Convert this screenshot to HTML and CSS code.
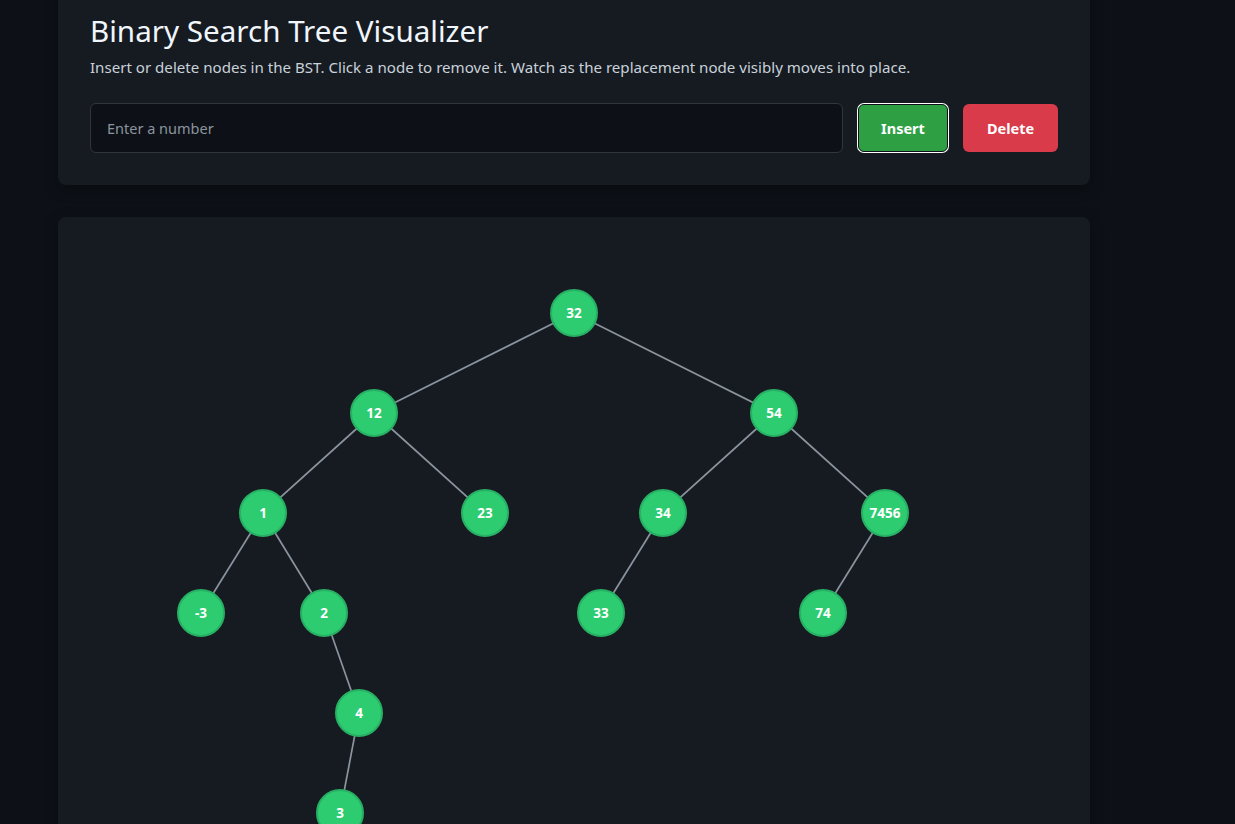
FILE: index.html
```html
<!DOCTYPE html>
<html lang="en">
<head>
<meta charset="utf-8">
<title>Binary Search Tree Visualizer</title>
<link rel="stylesheet" href="styles.css">
</head>
<body>
<main class="page">
  <section class="card controls-card">
    <h1 class="title">Binary Search Tree Visualizer</h1>
    <p class="subtitle">Insert or delete nodes in the BST. Click a node to remove it. Watch as the replacement node visibly moves into place.</p>
    <div class="controls">
      <input class="num-input" type="text" placeholder="Enter a number">
      <button class="btn btn-insert">Insert</button>
      <button class="btn btn-delete">Delete</button>
    </div>
  </section>
  <section class="card tree-card">
    <svg class="tree" width="1032" height="680" viewBox="0 0 1032 680">
      <g class="edges">
        <line x1="516" y1="96" x2="316" y2="196"/>
        <line x1="516" y1="96" x2="716" y2="196"/>
        <line x1="316" y1="196" x2="205" y2="296"/>
        <line x1="316" y1="196" x2="427" y2="296"/>
        <line x1="716" y1="196" x2="605" y2="296"/>
        <line x1="716" y1="196" x2="827" y2="296"/>
        <line x1="205" y1="296" x2="143" y2="396"/>
        <line x1="205" y1="296" x2="266" y2="396"/>
        <line x1="605" y1="296" x2="543" y2="396"/>
        <line x1="827" y1="296" x2="765" y2="396"/>
        <line x1="266" y1="396" x2="301" y2="496"/>
        <line x1="301" y1="496" x2="282" y2="596"/>
      </g>
      <g class="nodes">
        <g class="node"><circle cx="516" cy="96" r="23"/><text x="516" y="96">32</text></g>
        <g class="node"><circle cx="316" cy="196" r="23"/><text x="316" y="196">12</text></g>
        <g class="node"><circle cx="716" cy="196" r="23"/><text x="716" y="196">54</text></g>
        <g class="node"><circle cx="205" cy="296" r="23"/><text x="205" y="296">1</text></g>
        <g class="node"><circle cx="427" cy="296" r="23"/><text x="427" y="296">23</text></g>
        <g class="node"><circle cx="605" cy="296" r="23"/><text x="605" y="296">34</text></g>
        <g class="node"><circle cx="827" cy="296" r="23"/><text x="827" y="296">7456</text></g>
        <g class="node"><circle cx="143" cy="396" r="23"/><text x="143" y="396">-3</text></g>
        <g class="node"><circle cx="266" cy="396" r="23"/><text x="266" y="396">2</text></g>
        <g class="node"><circle cx="543" cy="396" r="23"/><text x="543" y="396">33</text></g>
        <g class="node"><circle cx="765" cy="396" r="23"/><text x="765" y="396">74</text></g>
        <g class="node"><circle cx="301" cy="496" r="23"/><text x="301" y="496">4</text></g>
        <g class="node"><circle cx="282" cy="596" r="23"/><text x="282" y="596">3</text></g>
      </g>
    </svg>
  </section>
</main>
</body>
</html>
```

FILE: styles.css
```css
* { box-sizing: border-box; }

html, body {
  margin: 0;
  padding: 0;
  background: #0d1117;
  color: #c9d1d9;
  font-family: "Noto Sans", "Open Sans", sans-serif;
  overflow: hidden;
}

.page {
  width: 1032px;
  margin-left: 58px;
  margin-top: -20px;
  display: flex;
  flex-direction: column;
  gap: 32px;
}

.card {
  background: #161b22;
  border-radius: 8px;
  box-shadow: 0 4px 14px rgba(0, 0, 0, 0.35);
}

.controls-card {
  padding: 32px;
}

.title {
  margin: 0;
  font-size: 29.6px;
  font-weight: 400;
  line-height: 38px;
  color: #f0f6fc;
}

.subtitle {
  margin: 6px 0 0;
  font-size: 15.1px;
  line-height: 22px;
  color: #c9d1d9;
}

.controls {
  display: flex;
  gap: 15px;
  margin-top: 25px;
  align-items: center;
}

.num-input {
  flex: 1;
  height: 50px;
  background: #0d1117;
  border: 1px solid #30363d;
  border-radius: 6px;
  padding: 0 16px;
  font-family: inherit;
  font-size: 14.5px;
  color: #c9d1d9;
  outline: none;
}

.num-input::placeholder {
  color: #8b949e;
}

.btn {
  height: 48px;
  border: none;
  border-radius: 6px;
  font-family: inherit;
  font-size: 14.5px;
  font-weight: 700;
  color: #ffffff;
  cursor: pointer;
  padding: 0;
}

.btn-insert {
  background: #2ea043;
  border: 1px solid #0d1117;
  box-shadow: 0 0 0 1px #ffffff;
  width: 90px;
}

.btn-delete {
  background: #da3b4b;
  width: 95px;
}

.tree-card {
  min-height: 700px;
}

.tree {
  display: block;
}

.edges line {
  stroke: #8b949e;
  stroke-width: 1.7;
}

.node circle {
  fill: #2ecc71;
  stroke: #27b063;
  stroke-width: 2;
}

.node text {
  fill: #ffffff;
  font-family: "Noto Sans", "Open Sans", sans-serif;
  font-size: 13.5px;
  font-weight: 700;
  text-anchor: middle;
  dominant-baseline: central;
}
```
